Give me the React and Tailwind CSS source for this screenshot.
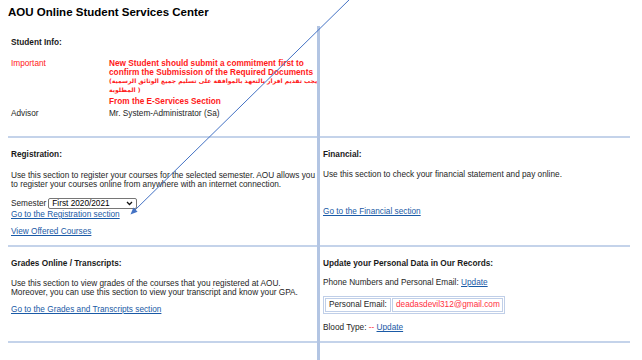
export default function App() {
  const link = "text-[#1a5aa6] underline";
  const head = "font-bold text-[#1a1a1a]";

  return (
    <div className="relative h-[360px] w-[642px] overflow-hidden bg-white font-['Liberation_Sans',Arial,sans-serif] text-[8.25px] leading-[9px] text-[#1e1e1e]">
      <h1 className="pl-[8px] pt-[6px] text-[11.5px] font-bold leading-[13px] text-black">
        AOU Online Student Services Center
      </h1>

      <div className="ml-[8px] mt-[7px] grid w-[622px] grid-cols-[309px_3px_310px] grid-rows-[112px_109px_96px_17px]">
        {/* student info */}
        <section className="col-start-1 row-start-1 border-b-2 border-[#c4d3ea] pl-[3px] pt-[11.5px]">
          <p className={head}>Student Info:</p>
          <div className="mt-[12.7px] flex">
            <span className="w-[98px] shrink-0 text-[#ff2020]">Important</span>
            <div className="font-bold text-[#ff1a1a]">
              <p className="whitespace-nowrap">New Student should submit a commitment first to</p>
              <p className="whitespace-nowrap">confirm the Submission of the Required Documents</p>
              <p className="whitespace-nowrap font-['DejaVu_Sans',sans-serif] text-[6.1px] leading-[8.5px]">
                (يجب تقديم اقرار بالتعهد بالموافقة على تسليم جميع الوثائق الرسمية
              </p>
              <p className="whitespace-nowrap font-['DejaVu_Sans',sans-serif] text-[6.1px] leading-[8.5px]">المطلوبة )</p>
              <p className="mt-[2.5px] whitespace-nowrap">From the E-Services Section</p>
            </div>
          </div>
          <div className="mt-[3px] flex">
            <span className="w-[98px] shrink-0">Advisor</span>
            <span>Mr. System-Administrator (Sa)</span>
          </div>
        </section>

        <div className="col-start-2 row-span-4 row-start-1 bg-[#b3c5e3]" />

        <div className="col-start-3 row-start-1 border-b-2 border-[#c4d3ea]" />

        {/* registration */}
        <section className="col-start-1 row-start-2 border-b-2 border-[#c4d3ea] pl-[3px] pt-[12px]">
          <p className={head}>Registration:</p>
          <p className="mt-[12px]">
            Use this section to register your courses for the selected semester. AOU allows you to register your
            courses online from anywhere with an internet connection.
          </p>
          <div className="mt-[9px] flex items-center">
            <span>Semester</span>
            <div className="ml-[2px] flex h-[11px] w-[89px] items-center justify-between rounded-[2px] border border-[#767676] bg-white pl-[3px] pr-[3px] text-black">
              <span>First 2020/2021</span>
              <svg width="7" height="5" viewBox="0 0 7 5">
                <path d="M1 1 L3.5 3.5 L6 1" fill="none" stroke="#111" strokeWidth="1.3" />
              </svg>
            </div>
          </div>
          <a className={`mt-[1px] block w-fit ${link}`}>Go to the Registration section</a>
          <a className={`mt-[8.3px] block w-fit ${link}`}>View Offered Courses</a>
        </section>

        <section className="col-start-3 row-start-2 border-b-2 border-[#c4d3ea] pl-[3px] pt-[12px]">
          <p className={head}>Financial:</p>
          <p className="mt-[11px]">Use this section to check your financial statement and pay online.</p>
          <a className={`mt-[27.6px] block w-fit ${link}`}>Go to the Financial section</a>
        </section>

        {/* grades */}
        <section className="col-start-1 row-start-3 border-b-2 border-[#c4d3ea] pl-[3px] pt-[12px]">
          <p className={head}>Grades Online / Transcripts:</p>
          <p className="mt-[10.5px]">
            Use this section to view grades of the courses that you registered at AOU.
            <br />
            Moreover, you can use this section to view your transcript and know your GPA.
          </p>
          <a className={`mt-[8.7px] block w-fit ${link}`}>Go to the Grades and Transcripts section</a>
        </section>

        <section className="col-start-3 row-start-3 border-b-2 border-[#c4d3ea] pl-[3px] pt-[11.5px]">
          <p className={head}>Update your Personal Data in Our Records:</p>
          <p className="mt-[10.3px]">
            Phone Numbers and Personal Email: <a className={link}>Update</a>
          </p>
          <div className="mt-[9.2px] flex h-[18px] w-fit gap-[1px] border border-[#c0cfe8] p-[1px]">
            <div className="flex w-[66px] items-center border border-[#c0cfe8] pl-[3px]">Personal Email:</div>
            <div className="flex w-[111px] items-center border border-[#c0cfe8] pl-[3px] text-[#ff3040]">
              deadasdevil312@gmail.com
            </div>
          </div>
          <p className="mt-[9.5px]">
            Blood Type: <span className="text-[#ff3040]">--</span> <a className={link}>Update</a>
          </p>
        </section>

        <div className="col-start-1 row-start-4" />
        <div className="col-start-3 row-start-4" />
      </div>

      {/* annotation arrow drawn over the page */}
      <svg className="pointer-events-none absolute inset-0" width="642" height="360" viewBox="0 0 642 360">
        <line x1="351" y1="-2" x2="134" y2="211" stroke="#4472c4" strokeWidth="1" />
        <polygon points="130.5,214.5 137.6,211.7 133.4,207.5" fill="#4472c4" />
      </svg>
    </div>
  );
}
